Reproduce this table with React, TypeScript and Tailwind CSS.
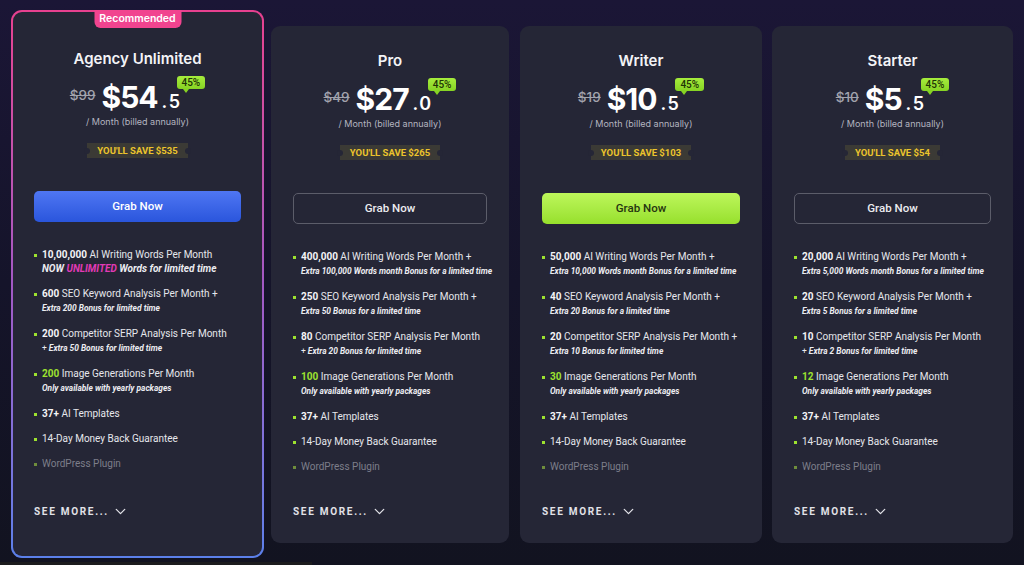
import type { ReactNode } from 'react';
import { ChevronDown } from 'lucide-react';

type Feature = {
  lead?: string;
  green?: boolean;
  text: string;
  sub?: ReactNode;
  bigSub?: boolean;
  muted?: boolean;
};

type Plan = {
  name: string;
  old: string;
  price: string;
  dec: string;
  save: string;
  button: 'blue' | 'green' | 'outline';
  featured?: boolean;
  size: string;
  features: Feature[];
};

const plus = (text: string) => (
  <>
    <span className="not-italic font-normal">+ </span>
    {text}
  </>
);

const tail: Feature[] = [
  { lead: '37+', text: ' AI Templates' },
  { text: '14-Day Money Back Guarantee' },
  { text: 'WordPress Plugin', muted: true },
];

const plans: Plan[] = [
  {
    name: 'Agency Unlimited',
    old: '$99',
    price: '$54',
    dec: '.5',
    save: '$535',
    button: 'blue',
    featured: true,
    size: 'w-[253px]',
    features: [
      {
        lead: '10,00,000',
        text: ' AI Writing Words Per Month',
        bigSub: true,
        sub: (
          <>
            NOW <span className="text-[#e23ab6]">UNLIMITED</span> Words for limited time
          </>
        ),
      },
      { lead: '600', text: ' SEO Keyword Analysis Per Month +', sub: 'Extra 200 Bonus for limited time' },
      { lead: '200', text: ' Competitor SERP Analysis Per Month', sub: plus('Extra 50 Bonus for limited time') },
      { lead: '200', green: true, text: ' Image Generations Per Month', sub: 'Only available with yearly packages' },
      ...tail,
    ],
  },
  {
    name: 'Pro',
    old: '$49',
    price: '$27',
    dec: '.0',
    save: '$265',
    button: 'outline',
    size: 'w-[238px] ml-[7px]',
    features: [
      { lead: '400,000', text: ' AI Writing Words Per Month +', sub: 'Extra 100,000 Words month Bonus for a limited time' },
      { lead: '250', text: ' SEO Keyword Analysis Per Month +', sub: 'Extra 50 Bonus for a limited time' },
      { lead: '80', text: ' Competitor SERP Analysis Per Month', sub: plus('Extra 20 Bonus for limited time') },
      { lead: '100', green: true, text: ' Image Generations Per Month', sub: 'Only available with yearly packages' },
      ...tail,
    ],
  },
  {
    name: 'Writer',
    old: '$19',
    price: '$10',
    dec: '.5',
    save: '$103',
    button: 'green',
    size: 'w-[242px] ml-[11px]',
    features: [
      { lead: '50,000', text: ' AI Writing Words Per Month +', sub: 'Extra 10,000 Words month Bonus for a limited time' },
      { lead: '40', text: ' SEO Keyword Analysis Per Month +', sub: 'Extra 20 Bonus for a limited time' },
      { lead: '20', text: ' Competitor SERP Analysis Per Month +', sub: 'Extra 10 Bonus for limited time' },
      { lead: '30', green: true, text: ' Image Generations Per Month', sub: 'Only available with yearly packages' },
      ...tail,
    ],
  },
  {
    name: 'Starter',
    old: '$10',
    price: '$5',
    dec: '.5',
    save: '$54',
    button: 'outline',
    size: 'w-[241px] ml-[10px]',
    features: [
      { lead: '20,000', text: ' AI Writing Words Per Month +', sub: 'Extra 5,000 Words month Bonus for a limited time' },
      { lead: '20', text: ' SEO Keyword Analysis Per Month +', sub: 'Extra 5 Bonus for a limited time' },
      { lead: '10', text: ' Competitor SERP Analysis Per Month', sub: plus('Extra 2 Bonus for limited time') },
      { lead: '12', green: true, text: ' Image Generations Per Month', sub: 'Only available with yearly packages' },
      ...tail,
    ],
  },
];

function GrabButton({ kind }: { kind: Plan['button'] }) {
  const styles = {
    blue: 'bg-gradient-to-b from-[#4f76f3] to-[#2a55dc] text-white',
    green: 'bg-gradient-to-b from-[#bdf65a] to-[#97e02b] text-[#263510]',
    outline: 'border-[1.5px] border-[#5c5d6a] text-[#ececf0]',
  };
  return (
    <button
      className={`mt-[33px] h-[31px] w-full rounded-[5px] font-['Roboto',sans-serif] text-[11.5px] font-medium ${styles[kind]}`}
    >
      Grab Now
    </button>
  );
}

function PlanBody({ plan }: { plan: Plan }) {
  return (
    <div
      className={`flex h-full flex-col items-center rounded-[9px] bg-[#252636] ${
        plan.featured ? 'px-[21px] pt-[37px] pb-[36px]' : 'px-[22px] pt-[25px] pb-[23px]'
      }`}
    >
      <h2 className="font-['Inter',sans-serif] text-[15px] leading-[20px] font-semibold text-[#f3f3f6]">
        {plan.name}
      </h2>

      <div className="mt-[9px] flex h-[38px] items-center justify-center font-['Inter',sans-serif]">
        <span className="mr-[6px] mb-[4px] text-[13.5px] font-medium text-[#a2a3ad] line-through">{plan.old}</span>
        <span className="text-[30px] leading-[38px] font-bold tracking-[-1px] text-white">{plan.price}</span>
        <span className="mt-[8px] ml-[4px] text-[18px] font-semibold tracking-[1.5px] text-white">{plan.dec}</span>
        <span className="relative -mt-[30px] -ml-[5px] rounded-[3px] bg-gradient-to-b from-[#a6ec3c] to-[#86d323] px-[5px] font-['Roboto',sans-serif] text-[10px] leading-[13px] font-medium text-[#1f3306]">
          45%
          <span className="absolute -bottom-[4px] left-[6px] h-0 w-0 border-x-[3px] border-t-[4px] border-x-transparent border-t-[#86d323]" />
        </span>
      </div>

      <p className="font-['Inter',sans-serif] text-[9px] leading-[12px] text-[#b4b5c0]">
        / Month (billed annually)
      </p>

      <div className="relative mt-[15px] h-[15px] bg-[#3b3a35] px-[10px] font-['Roboto',sans-serif] text-[9.5px] leading-[15px] font-bold text-[#ecc42c]">
        <span className="absolute top-[4.5px] -left-[3px] h-[6px] w-[6px] rounded-full bg-[#252636]" />
        YOU'LL SAVE {plan.save}
        <span className="absolute top-[4.5px] -right-[3px] h-[6px] w-[6px] rounded-full bg-[#252636]" />
      </div>

      <GrabButton kind={plan.button} />

      <ul className="mt-[26px] flex w-full flex-col gap-[11px] font-['Roboto',sans-serif]">
        {plan.features.map((f, i) => (
          <li key={i} className="flex">
            <span className="w-[8px] shrink-0 pt-[6px]">
              <span className={`block h-[3px] w-[3px] ${f.muted ? 'bg-[#6f8d3c]' : 'bg-[#9de22f]'}`} />
            </span>
            <div className="whitespace-nowrap">
              <p className={`text-[10px] leading-[14px] ${f.muted ? 'text-[#7d7e8a]' : 'text-[#e6e6ec]'}`}>
                {f.lead && (
                  <span className={`font-bold ${f.green ? 'text-[#9de22f]' : 'text-[#f4f4f7]'}`}>{f.lead}</span>
                )}
                {f.text}
              </p>
              {f.sub && (
                <p
                  className={`font-bold text-[#ececf1] italic ${
                    f.bigSub ? 'text-[10px] leading-[14px]' : 'text-[8.4px] leading-[15px]'
                  }`}
                >
                  {f.sub}
                </p>
              )}
            </div>
          </li>
        ))}
      </ul>

      <div className="mt-auto flex w-full items-center gap-[3px] font-['Roboto',sans-serif] text-[10px] leading-[14px] font-bold tracking-[1.7px] text-[#e2e2e8]">
        SEE MORE...
        <ChevronDown size={17} strokeWidth={1.8} />
      </div>
    </div>
  );
}

function PlanCard({ plan }: { plan: Plan }) {
  if (plan.featured) {
    return (
      <div
        className={`relative mt-[10px] h-[548px] shrink-0 rounded-[11px] bg-gradient-to-b from-[#e8408f] via-[#a258c4] to-[#5b80ea] p-[2px] ${plan.size}`}
      >
        <PlanBody plan={plan} />
        <div className="absolute top-0 left-1/2 flex h-[18px] w-[87px] -translate-x-1/2 items-center justify-center rounded-b-[6px] bg-[#f1448f] font-['Inter',sans-serif] text-[10.5px] font-semibold text-white">
          Recommended
        </div>
      </div>
    );
  }
  return (
    <div className={`mt-[26px] h-[517px] shrink-0 ${plan.size}`}>
      <PlanBody plan={plan} />
    </div>
  );
}

export default function App() {
  return (
    <div className="flex h-[565px] w-[1024px] flex-col overflow-hidden bg-gradient-to-b from-[#1b1636] via-[#15142a] to-[#121320]">
      <div className="flex h-[562px] items-start pl-[11px]">
        {plans.map((p) => (
          <PlanCard key={p.name} plan={p} />
        ))}
      </div>
      <div className="h-[3px] w-[312px] bg-[#1c1c1e]" />
    </div>
  );
}
